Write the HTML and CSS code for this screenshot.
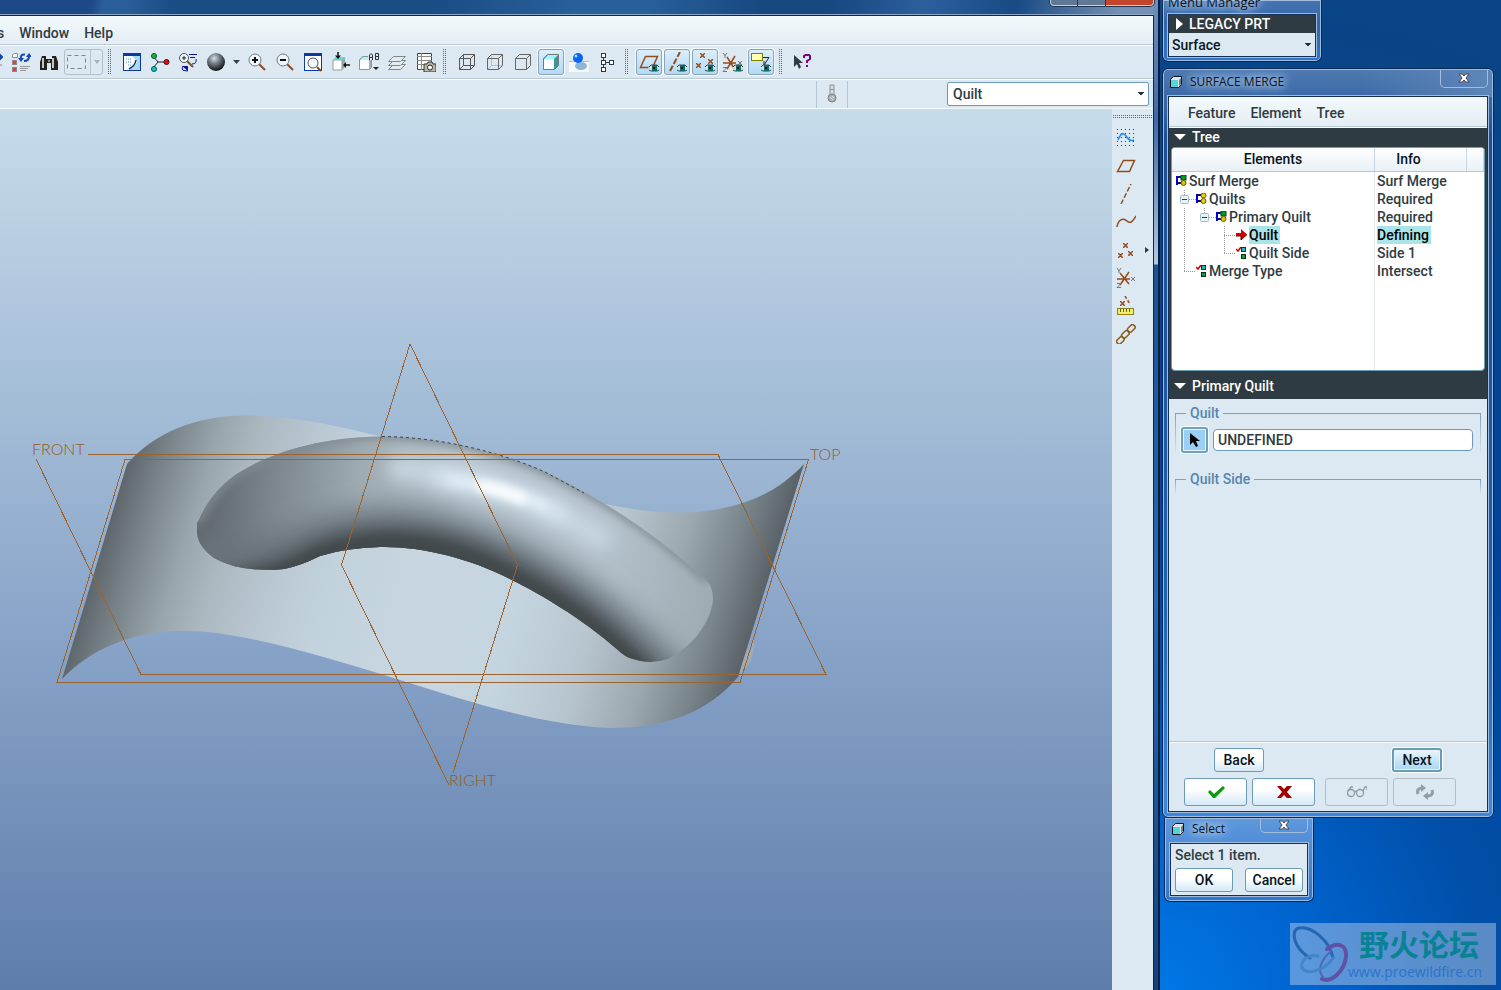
FILE: index.html
```
<!DOCTYPE html>
<html lang="en">
<head>
    <meta charset="UTF-8">
    <meta name="viewport" content="width=device-width, initial-scale=1.0">
    <title>Surface Merge</title>
    <link rel="stylesheet" href="styles.css">
</head>
<body>

<!-- Shared icon shapes -->
<svg class="defs" width="0" height="0" aria-hidden="true">
    <symbol id="eye" viewBox="0 0 12 8">
        <path d="M0 4L3 1H9L12 4L9 7H3Z" fill="#d8dfe2"/>
        <path d="M1 3L3 1H9L11 3M1 6L3 7H9L11 6" fill="none" stroke="#3a4247"/>
        <rect x="4" y="1" width="5" height="6" fill="#0a6e68"/>
        <rect x="5" y="3" width="2" height="2" fill="#012"/>
    </symbol>
    <symbol id="lens" viewBox="0 0 20 20">
        <path d="M12 12L18 18" stroke="#8a4b20" stroke-width="2"/>
        <circle cx="8" cy="8" r="6" fill="#eef5f9" stroke="#777"/>
    </symbol>
    <symbol id="cube" viewBox="0 0 12 12">
        <path d="M.5 3.500L3.500 .5H11.500V8.500L8.500 11.500H.5Z" fill="#dfe8e6" stroke="#112"/>
        <path d="M1 4H8V11H1Z" fill="#4fd9d6"/>
        <path d="M9 4L11 2V8L9 10Z" fill="#6d7c7c"/>
    </symbol>
    <symbol id="cross" viewBox="0 0 12 10">
        <path d="M1 1H4.500L6 3L7.500 1H11L8 5L11 9H7.500L6 7L4.500 9H1L4 5Z" fill="#fff" stroke="#445" stroke-width="1"/>
    </symbol>
    <symbol id="node" viewBox="0 0 11 11">
        <path d="M5 2H1V10M1 8H5" fill="none" stroke="#0000d8" stroke-width="2"/>
        <path d="M1 2H5M2 8H5" stroke="#111"/>
    </symbol>
    <symbol id="node-gy" viewBox="0 0 11 11">
        <use href="#node"/>
        <rect x="5" y="0" width="5" height="5" fill="#079b1c" stroke="#043" stroke-width="1"/>
        <circle cx="7.500" cy="8" r="2.500" fill="#d9c400" stroke="#665c00"/>
    </symbol>
    <symbol id="node-yy" viewBox="0 0 11 11">
        <use href="#node"/>
        <circle cx="7.500" cy="2.500" r="2.500" fill="#e4cf00" stroke="#665c00"/>
        <circle cx="7.500" cy="8" r="2.500" fill="#e4cf00" stroke="#665c00"/>
    </symbol>
    <symbol id="done" viewBox="0 0 11 12">
        <path d="M0 2L2 4L5 0" fill="none" stroke="#d00000" stroke-width="1.500"/>
        <rect x="5.500" y="0.500" width="4" height="4" fill="#22bcbc" stroke="#033"/>
        <rect x="5.500" y="7.500" width="4" height="4" fill="#10a030" stroke="#031"/>
    </symbol>
    <symbol id="minus" viewBox="0 0 20 18">
        <path d="M13 9.500H20" stroke="#999" stroke-dasharray="1 1"/>
        <path d="M8.500 0V5" stroke="#999" stroke-dasharray="1 1"/>
        <rect x="4.500" y="5.500" width="8" height="8" rx="1" fill="#e6f1f8" stroke="#9fbccd"/>
        <path d="M6 9.500H11" stroke="#25414f"/>
    </symbol>
    <symbol id="guide-v" viewBox="0 0 20 18">
        <path d="M8.500 0V18" stroke="#999" stroke-dasharray="1 1"/>
    </symbol>
    <symbol id="guide-tee" viewBox="0 0 20 18">
        <path d="M8.500 0V18M8 9.500H20" stroke="#999" stroke-dasharray="1 1"/>
    </symbol>
    <symbol id="guide-end" viewBox="0 0 20 18">
        <path d="M8.500 0V9M8 9.500H20" stroke="#999" stroke-dasharray="1 1"/>
    </symbol>
    <symbol id="xs" viewBox="0 0 5 5">
        <path d="M0 0L5 5M5 0L0 5" stroke="#964b1a" stroke-width="1.500"/>
    </symbol>
</svg>

<div class="desktop">

    <!-- Main application window -->
    <main class="app">
        <header class="app-title">
            <button class="cap" aria-label="Minimize"></button>
            <button class="cap" aria-label="Maximize"></button>
            <button class="cap cap-close" aria-label="Close"></button>
        </header>

        <div class="app-client">
            <nav class="menubar">
                <a href="#" class="cut">s</a>
                <a href="#">Window</a>
                <a href="#">Help</a>
            </nav>

            <div class="toolbar">
                <button class="tool" aria-label="Regenerate"><svg width="20" height="20"><path d="M12 5H19M16 2L19 5L16 8" fill="none" stroke="#1446a8" stroke-width="2"/><path d="M13 13H19" stroke="#888"/></svg></button>
                <button class="tool" aria-label="Regenerate manager"><svg width="20" height="20"><g stroke="#8a8a8a"><path d="M1.500 2.500L3.500 1.500H6.500V5.500H1.500Z" fill="#f8f8f8"/><rect x="1.500" y="8.500" width="4" height="4" fill="#e04040"/><rect x="1.500" y="15.500" width="4" height="4" fill="#e04040"/></g><path d="M9 14.500H19M9 16.500H17M9 18.500H15" stroke="#999"/><path d="M10 7Q9 2 14 2.500M18 4Q18 9 13 9" fill="none" stroke="#1446b8" stroke-width="2"/><path d="M7 6H13L10 10ZM15 5H21L18 1Z" fill="#1446b8"/></svg></button>
                <button class="tool" aria-label="Find"><svg width="20" height="20"><path d="M3 4H7V7H13V4H17L19 10V18H12V11H8V18H1V10Z" fill="#222"/><path d="M4 6V16M14 6V16" stroke="#c9c4b4" stroke-width="2"/><path d="M9 9H11" stroke="#999" stroke-width="2"/></svg></button>
                <button class="tool pick" aria-label="Select inside box" disabled><svg width="39" height="26"><path d="M26.500 1V25" stroke="#b8c4ca"/><rect x="3.500" y="6.500" width="18" height="13" fill="none" stroke="#7c868c" stroke-dasharray="4 3"/><path d="M30 11H36L33 15Z" fill="#a9b3b8"/></svg></button>
                <span class="grip"></span>
                <button class="tool" aria-label="Repaint"><svg width="20" height="20"><rect x="1.500" y="1.500" width="17" height="17" fill="#fff" stroke="#0a3aa0"/><path d="M1 1H19V4H1Z" fill="#0a3aa0"/><path d="M10 4H18V18H7Q14 14 15 9Z" fill="#a8d8f4"/><path d="M7 17Q13 14 14 8" fill="none" stroke="#11305e" stroke-width="1.500"/><path d="M4 7H9M4 10H10M6 13H9" stroke="#3a9ae0" stroke-dasharray="1 1"/></svg></button>
                <button class="tool" aria-label="Spin center"><svg width="20" height="20"><path d="M3 4L8 10L3 16M8 10H16" fill="none" stroke="#223"/><circle cx="4" cy="4" r="2.500" fill="#10c020" stroke="#053"/><circle cx="16.500" cy="10" r="2.500" fill="#e01010" stroke="#500"/><circle cx="4" cy="17" r="2.500" fill="#10c8c8" stroke="#055"/></svg></button>
                <button class="tool" aria-label="Orient mode"><svg width="20" height="20"><path d="M9 9L15 15" stroke="#8a4b20" stroke-width="2"/><circle cx="6" cy="6" r="4.500" fill="#eef5f9" stroke="#555"/><path d="M4 6H8M6 4V8" stroke="#222"/><g stroke="#1010a0" fill="none"><path d="M11 2.500H19M12 5.500H17M18 7Q19 12 14 12M5 14Q3 18 6 18.500L10 19"/></g><path d="M4 14H10V19Z" fill="#1010a0"/></svg></button>
                <button class="tool" aria-label="Appearance"><svg width="20" height="20"><defs><radialGradient id="ball" cx=".4" cy=".3" r=".7"><stop offset="0" stop-color="#d5dde2"/><stop offset=".4" stop-color="#78838b"/><stop offset="1" stop-color="#111"/></radialGradient></defs><circle cx="10" cy="10" r="9" fill="url(#ball)"/></svg></button>
                <button class="tool drop" aria-label="Appearance list"><svg width="7" height="4"><path d="M0 0H7L3.500 4Z" fill="#333e46"/></svg></button>
                <button class="tool" aria-label="Zoom in"><svg width="20" height="20"><use href="#lens"/><path d="M5 8H11M8 5V11" stroke="#111" stroke-width="2"/></svg></button>
                <button class="tool" aria-label="Zoom out"><svg width="20" height="20"><use href="#lens"/><path d="M5 8H11" stroke="#111" stroke-width="2"/></svg></button>
                <button class="tool" aria-label="Refit"><svg width="20" height="20"><rect x="1.500" y="1.500" width="17" height="17" fill="#fff" stroke="#0a3aa0"/><path d="M1 1H19V4H1Z" fill="#0a3aa0"/><path d="M14 15L18 19" stroke="#8a4b20" stroke-width="2"/><circle cx="10" cy="11" r="5" fill="#f2f8fb" stroke="#555"/></svg></button>
                <button class="tool" aria-label="Reorient"><svg width="20" height="20"><path d="M2 8L5 5H14V15L11 18H2Z" fill="#9aa"/><path d="M2 8H11V18H2Z" fill="#fff" stroke="#999"/><path d="M2 8L5 5H14L11 8Z" fill="#55dede"/><path d="M7 0V5M19 13H15" stroke="#111" stroke-width="1.500"/><path d="M4 3.500H10L7 7ZM15 10V16L12 13Z" fill="#111"/></svg></button>
                <button class="tool" aria-label="Saved views"><svg width="22" height="20"><path d="M1.500 7.500L4.500 4.500H13.500V15.500L11.500 17.500H1.500Z" fill="#aab" stroke="#899"/><path d="M2 8H11V17H2Z" fill="#fff"/><path d="M2 8L5 5H13L11 8Z" fill="#b4f2f0"/><rect x="10" y="0" width="12" height="8" fill="#dce9f2"/><path d="M11.500 8V3L13 1.500L14.500 3V8M12 5.500H14M17.500 1.500V7.500H20.500V1.500H17.500M17.500 4.500H20.500" fill="none" stroke="#333"/><path d="M15 15H21L18 18Z" fill="#222"/></svg></button>
                <button class="tool" aria-label="Layers"><svg width="20" height="20"><g fill="#e4ebef" stroke="#80898e"><path d="M1.500 17.500L6.500 12.500H18.500L13.500 17.500Z"/><path d="M1.500 13.500L6.500 8.500H18.500L13.500 13.500Z"/><path d="M1.500 9.500L6.500 4.500H18.500L13.500 9.500Z"/></g></svg></button>
                <button class="tool" aria-label="View manager"><svg width="22" height="20"><path d="M3.500 1.500H17.500V17.500H3.500Z" fill="#fff" stroke="#444"/><path d="M3 4.500H18M3 8.500H18M3 12.500H18M7.500 1V18" stroke="#888"/><path d="M10 12H13L14 10H18L19 12H22V20H10Z" fill="#b9b6a2" stroke="#333"/><circle cx="16" cy="15.500" r="2.500" fill="#fff" stroke="#222"/></svg></button>
                <span class="grip"></span>
                <button class="tool" aria-label="Wireframe"><svg width="20" height="20"><path d="M2.500 6.500H13.500V17.500H2.500ZM2.500 6.500L6.500 2.500H17.500V13.500L13.500 17.500M13.500 6.500L17.500 2.500M6.500 2.500V13.500H17.500M6.500 13.500L2.500 17.500" fill="none" stroke="#555"/></svg></button>
                <button class="tool" aria-label="Hidden line"><svg width="20" height="20"><path d="M6.500 2.500V13.500H17.500M6.500 13.500L2.500 17.500" fill="none" stroke="#b3bec5"/><path d="M2.500 6.500H13.500V17.500H2.500ZM2.500 6.500L6.500 2.500H17.500V13.500L13.500 17.500M13.500 6.500L17.500 2.500" fill="none" stroke="#666"/></svg></button>
                <button class="tool" aria-label="No hidden"><svg width="20" height="20"><path d="M2.500 6.500H13.500V17.500H2.500ZM2.500 6.500L6.500 2.500H17.500V13.500L13.500 17.500M13.500 6.500L17.500 2.500" fill="none" stroke="#666"/></svg></button>
                <button class="tool on" aria-label="Shading"><svg width="20" height="20"><path d="M2.500 6.500L6.500 2.500H17.500V13.500L13.500 17.500H2.500Z" fill="#3a9a9a" stroke="#777"/><path d="M3 7L7 3H17L13 7Z" fill="#9ff6f6"/><path d="M3 7H13V17H3Z" fill="#fff"/></svg></button>
                <button class="tool" aria-label="Enhanced realism"><svg width="20" height="20"><rect x="0" y="10" width="20" height="10" fill="#f4f8fa"/><path d="M0 9.500H20" stroke="#b4bcc4"/><ellipse cx="12" cy="14" rx="6" ry="4" fill="#8fb5d6"/><circle cx="9" cy="6" r="5" fill="#0a64f0"/><circle cx="7" cy="4" r="1.500" fill="#a8d4ff"/></svg></button>
                <button class="tool" aria-label="Model tree"><svg width="20" height="20"><g fill="#fff" stroke="#2f3a42"><path d="M6.500 5V15M9 10.500H12"/><rect x="4.500" y="1.500" width="4" height="4"/><rect x="4.500" y="8.500" width="4" height="4"/><rect x="4.500" y="15.500" width="4" height="4"/><rect x="12.500" y="8.500" width="4" height="4"/></g></svg></button>
                <span class="grip"></span>
                <button class="tool on" aria-label="Plane display"><svg width="22" height="20"><path d="M2.500 15.500L7.500 4.500H19.500L14.500 15.500Z" fill="none" stroke="#964b1a" stroke-width="1.500"/><use href="#eye" x="10" y="12" width="12" height="8"/></svg></button>
                <button class="tool on" aria-label="Axis display"><svg width="22" height="20"><path d="M4 19L14 0" stroke="#964b1a" stroke-width="2" stroke-dasharray="6 2"/><use href="#eye" x="10" y="12" width="12" height="8"/></svg></button>
                <button class="tool on" aria-label="Point display"><svg width="22" height="20"><use href="#xs" x="6" y="1" width="5" height="5"/><use href="#xs" x="14" y="7" width="5" height="5"/><use href="#xs" x="2" y="11" width="5" height="5"/><use href="#eye" x="10" y="12" width="12" height="8"/></svg></button>
                <button class="tool" aria-label="Csys display"><svg width="22" height="20"><path d="M1 11H14M5 17L13 4M5 5L12 16" stroke="#964b1a" stroke-width="1.500"/><path d="M1 1L3 3.500L5 1M3 3V6M1 15.500H5L1 19.500H5M16 9L20 13M20 9L16 13" fill="none" stroke="#777"/><use href="#eye" x="10" y="12" width="12" height="8"/></svg></button>
                <button class="tool on" aria-label="Annotation display"><svg width="22" height="20"><rect x="1.500" y="1.500" width="11" height="7" fill="#ffffb0" stroke="#808000"/><path d="M13 5.500H19L14 13M14 9V14H18" fill="none" stroke="#222"/><use href="#eye" x="10" y="12" width="12" height="8"/></svg></button>
                <span class="grip"></span>
                <button class="tool" aria-label="What's this?"><svg width="20" height="20"><path d="M1 3L10 11H6L8 15L6 17L4 12L1 15Z" fill="#2f3a42"/><path d="M11 6V4L12.500 3H16L17 4V7L14 9V11M14 13V15" fill="none" stroke="#7a0080" stroke-width="2"/></svg></button>
            </div>

            <div class="filterbar">
                <span class="status-light"><svg width="12" height="20"><path d="M4 1H8V12H4Z" fill="#d5dde2" stroke="#8a9499"/><path d="M4 5.500H8" stroke="#8a9499"/><circle cx="6" cy="14" r="4" fill="#a9b1b5" stroke="#7a8489"/><path d="M4 13L7 16M6 12L8 14" stroke="#dde3e6"/></svg></span>
                <select class="filter" aria-label="Selection filter">
                    <option>Quilt</option>
                </select>
            </div>

            <div class="workspace">
                <div class="viewport">
                    <svg class="model" viewBox="0 109 1112 881" preserveAspectRatio="xMidYMid meet">
                        <defs>
                            <linearGradient id="quilt" gradientUnits="userSpaceOnUse" x1="62" y1="678" x2="680" y2="867">
                                <stop offset="0" stop-color="#5f676c"/>
                                <stop offset=".06" stop-color="#7d888e"/>
                                <stop offset=".12" stop-color="#98a5ac"/>
                                <stop offset=".18" stop-color="#abb8c0"/>
                                <stop offset=".26" stop-color="#b8c6d1"/>
                                <stop offset=".35" stop-color="#c2d2dc"/>
                                <stop offset=".5" stop-color="#c7d6e0"/>
                                <stop offset=".64" stop-color="#c5d5df"/>
                                <stop offset=".76" stop-color="#b7c5cf"/>
                                <stop offset=".86" stop-color="#9ba8af"/>
                                <stop offset=".94" stop-color="#78838a"/>
                                <stop offset="1" stop-color="#5a6267"/>
                            </linearGradient>
                            <linearGradient id="tube" gradientUnits="userSpaceOnUse" x1="197" y1="530" x2="713" y2="600">
                                <stop offset="0" stop-color="#5d656a"/>
                                <stop offset=".12" stop-color="#78838a"/>
                                <stop offset=".3" stop-color="#a0acb4"/>
                                <stop offset=".5" stop-color="#b6c4cf"/>
                                <stop offset=".8" stop-color="#b2c0ca"/>
                                <stop offset="1" stop-color="#9fabb2"/>
                            </linearGradient>
                            <clipPath id="tube-clip">
                                <path d="M197 523L199 520C204 507 217 488 234 476C260 458 310 437 382 436.500C440 437 500 452 545 472C600 497 660 537 706 580Q713 586 713 600C711 620 695 645 668 659Q650 665 633 659Q625 657 618 650C580 617 540 594 512 580C470 558 420 546 380 547Q345 548 320 556Q300 566 284 569Q240 573 214 558Q196 545 197 530Z"/>
                            </clipPath>
                            <filter id="soft4" filterUnits="userSpaceOnUse" x="100" y="350" width="700" height="450"><feGaussianBlur stdDeviation="4"/></filter>
                            <filter id="soft8" filterUnits="userSpaceOnUse" x="100" y="350" width="700" height="450"><feGaussianBlur stdDeviation="8"/></filter>
                            <filter id="soft14" filterUnits="userSpaceOnUse" x="100" y="350" width="700" height="450"><feGaussianBlur stdDeviation="14"/></filter>
                        </defs>

                        <!-- Wavy quilt -->
                        <path d="M754 640Q756 660 740 674L738 664Z" fill="#a0abb1"/>
                        <path d="M62 679L127 464C154 433 196 415 250 415.500C300 417 340 426 382 437L600 503C640 511 665 513 690 512.500C740 509 775 495 804 464L738 677C708 712 667 728 612 728C545 726 470 702 400 680C320 655 240 631 185 631C130 631 90 650 62 679Z" fill="url(#quilt)"/>

                        <!-- Swept tube -->
                        <g clip-path="url(#tube-clip)">
                            <rect x="190" y="430" width="530" height="240" fill="url(#tube)"/>
                            <g fill="none" stroke-linecap="round">
                                <path d="M190 580Q270 590 320 562C400 534 460 557 512 584C560 609 590 629 650 690" stroke="#69737a" stroke-width="84" filter="url(#soft14)"/>
                                <path d="M190 600Q270 590 320 562C400 534 460 557 512 584C560 609 590 629 650 690" stroke="#50575c" stroke-width="46" filter="url(#soft8)"/>
                                <path d="M255 584Q285 580 320 560C400 532 460 555 512 582C560 607 590 627 645 680" stroke="#43484b" stroke-width="26" filter="url(#soft4)"/>
                                <path d="M199 520C210 500 217 488 234 476C260 458 310 437 382 435C440 436 500 451 545 471C600 496 660 536 706 579" stroke="#808b92" stroke-width="8" filter="url(#soft4)"/>
                                <path d="M400 468Q510 480 600 538" stroke="#c6d5df" stroke-width="24" filter="url(#soft8)"/>
                                <path d="M440 478Q505 484 560 514" stroke="#dfedf7" stroke-width="12" filter="url(#soft8)"/>
                                <path d="M452 481Q500 485 545 506" stroke="#e6f1f9" stroke-width="6" filter="url(#soft4)"/>
                                <path d="M482 487Q502 490 522 499" stroke="#fff" stroke-width="10" filter="url(#soft4)"/>
                            </g>
                        </g>
                        <path d="M382 436.500C440 437 500 452 545 472L584 493" fill="none" stroke="#3d4347" stroke-dasharray="3 3"/>

                        <!-- Datum planes -->
                        <g class="datum">
                            <path d="M88 454.500H718L826 674.500H141L36 459"/>
                            <path d="M125 459.500H808.500L740 682.500H57Z"/>
                            <path d="M453 773L517.500 565L410 344L341.500 565L449 785"/>
                        </g>
                        <g class="datum-label">
                            <text x="32" y="455">FRONT</text>
                            <text x="810" y="460">TOP</text>
                            <text x="449" y="786">RIGHT</text>
                        </g>
                    </svg>
                </div>

                <div class="sidebar">
                    <span class="grip-h"></span>
                    <button class="tool" aria-label="Sketch"><svg width="20" height="20"><g stroke="#1a3a8a" stroke-dasharray="1 3"><path d="M1 1.500H19M1 5.500H19M1 9.500H19M1 13.500H19M1 17.500H19"/></g><path d="M2 12Q6 2 10 8T18 12" fill="none" stroke="#1a8cf0" stroke-width="1.500"/></svg></button>
                    <button class="tool" aria-label="Plane"><svg width="20" height="20"><path d="M1.500 15.500L7.500 4.500H18.500L13.500 15.500Z" fill="none" stroke="#964b1a" stroke-width="1.500"/></svg></button>
                    <button class="tool" aria-label="Axis"><svg width="20" height="20"><path d="M5 20L15 0" stroke="#964b1a" stroke-width="1.500" stroke-dasharray="5 2"/></svg></button>
                    <button class="tool" aria-label="Curve"><svg width="20" height="20"><path d="M1 15C2 8 7 5 11 9S18 7 20 4" fill="none" stroke="#964b1a" stroke-width="1.500"/></svg></button>
                    <div class="tool-group">
                        <button class="tool" aria-label="Point"><svg width="20" height="20"><use href="#xs" x="7" y="3" width="5" height="5"/><use href="#xs" x="12" y="11" width="5" height="5"/><use href="#xs" x="2" y="13" width="5" height="5"/></svg></button>
                        <button class="tool drop" aria-label="More point tools"><svg width="4" height="6"><path d="M0 0L4 3L0 6Z" fill="#2f3a42"/></svg></button>
                    </div>
                    <button class="tool" aria-label="Coordinate system"><svg width="20" height="20"><path d="M1 11H14M4 17L13 4M4 5L13 16" stroke="#964b1a" stroke-width="1.500"/><path d="M1 0L3 3L5 0M3 3V5M1 15.500H5L1 19.500H5M15 9L19 13M19 9L15 13" fill="none" stroke="#777"/></svg></button>
                    <button class="tool" aria-label="Analysis"><svg width="20" height="20"><use href="#xs" x="4" y="5" width="5" height="5"/><path d="M9 0L14 8" stroke="#964b1a" stroke-width="1.500" stroke-dasharray="3 2"/><rect x="1.500" y="12.500" width="16" height="6" fill="#f4ee60" stroke="#8a8420"/><path d="M4.500 13V16M7.500 13V16M10.500 13V16M13.500 13V16" stroke="#665f10"/></svg></button>
                    <button class="tool" aria-label="Reference"><svg width="20" height="20"><g fill="none" stroke="#8a5a1a" stroke-width="1.500"><rect x="-4" y="-2" width="8" height="5" rx="2" transform="translate(4 16) rotate(-45)"/><rect x="-4" y="-2" width="8" height="5" rx="2" transform="translate(9 10) rotate(-45)"/><rect x="-4" y="-2" width="8" height="5" rx="2" transform="translate(15 4) rotate(-45)"/></g></svg></button>
                </div>
            </div>
        </div>
    </main>

    <!-- Floating dialogs -->
    <aside class="dialogs">
        <section class="window menu-manager">
            <div class="caption"><span class="glow">Menu Manager</span></div>
            <div class="client">
                <h2 class="bar"><svg width="7" height="12"><path d="M0 0L7 6L0 12Z" fill="#fff"/></svg>LEGACY PRT</h2>
                <select class="flat" aria-label="Part menu">
                    <option>Surface</option>
                </select>
            </div>
        </section>

        <section class="window merge">
            <div class="caption">
                <svg width="12" height="12"><use href="#cube"/></svg>
                <span class="glow">SURFACE MERGE</span>
                <button class="close" aria-label="Close"><svg width="12" height="10"><use href="#cross"/></svg></button>
            </div>
            <div class="client">
                <nav class="menubar merge-menu">
                    <a href="#">Feature</a>
                    <a href="#">Element</a>
                    <a href="#">Tree</a>
                </nav>
                <div class="dark">
                    <h2 class="bar"><svg width="12" height="6"><path d="M0 0H12L6 6Z" fill="#fff"/></svg>Tree</h2>
                    <div class="tree">
                        <table>
                            <thead>
                                <tr><th>Elements</th><th class="info">Info</th><th class="rest"></th></tr>
                            </thead>
                            <tbody>
                                <tr>
                                    <td><div class="item"><svg width="11" height="11"><use href="#node-gy"/></svg><span>Surf Merge</span></div></td>
                                    <td colspan="2">Surf Merge</td>
                                </tr>
                                <tr>
                                    <td><div class="item"><svg width="20" height="18"><use href="#minus"/></svg><svg width="11" height="11"><use href="#node-yy"/></svg><span>Quilts</span></div></td>
                                    <td colspan="2">Required</td>
                                </tr>
                                <tr>
                                    <td><div class="item"><svg width="20" height="18"><use href="#guide-v"/></svg><svg width="20" height="18"><use href="#minus"/></svg><svg width="11" height="11"><use href="#node-gy"/></svg><span>Primary Quilt</span></div></td>
                                    <td colspan="2">Required</td>
                                </tr>
                                <tr class="current">
                                    <td><div class="item"><svg width="20" height="18"><use href="#guide-v"/></svg><svg width="20" height="18"></svg><svg width="20" height="18"><use href="#guide-tee"/></svg><svg width="11" height="11"><path d="M0 4H5V0L11 5.500L5 11V7H0Z" fill="#d40000"/><path d="M0 7H5V11L11 5.500" fill="none" stroke="#600"/></svg><span><mark>Quilt</mark></span></div></td>
                                    <td colspan="2"><mark>Defining</mark></td>
                                </tr>
                                <tr>
                                    <td><div class="item"><svg width="20" height="18"><use href="#guide-v"/></svg><svg width="20" height="18"></svg><svg width="20" height="18"><use href="#guide-end"/></svg><svg width="11" height="12"><use href="#done"/></svg><span>Quilt Side</span></div></td>
                                    <td colspan="2">Side 1</td>
                                </tr>
                                <tr>
                                    <td><div class="item"><svg width="20" height="18"><use href="#guide-end"/></svg><svg width="11" height="12"><use href="#done"/></svg><span>Merge Type</span></div></td>
                                    <td colspan="2">Intersect</td>
                                </tr>
                                <tr class="filler"><td></td><td colspan="2"></td></tr>
                            </tbody>
                        </table>
                    </div>
                    <h2 class="bar bar-tall"><svg width="12" height="6"><path d="M0 0H12L6 6Z" fill="#fff"/></svg>Primary Quilt</h2>
                </div>

                <div class="panel">
                    <fieldset>
                        <legend>Quilt</legend>
                        <div class="collector">
                            <button class="arrow" aria-label="Select quilt"><svg width="12" height="16"><path d="M1 1V13L4 10L7 15L9 14L7 9H11Z" fill="#000"/></svg></button>
                            <input type="text" value="UNDEFINED" aria-label="Quilt">
                        </div>
                    </fieldset>
                    <fieldset class="side">
                        <legend>Quilt Side</legend>
                    </fieldset>
                </div>

                <div class="footer">
                    <div class="steps">
                        <button class="btn">Back</button>
                        <button class="btn focus">Next</button>
                    </div>
                    <div class="actions">
                        <div class="pair">
                            <button class="btn" aria-label="Apply"><svg width="18" height="14"><path d="M1 7L3 5L7 9L16 1L18 3L8 13H6Z" fill="#0a9a0a"/></svg></button>
                            <button class="btn" aria-label="Cancel feature"><svg width="16" height="14"><path d="M1 1H5L8 4L11 1H16L11 7L16 13H11L8 10L5 13H1L6 7Z" fill="#a00000"/></svg></button>
                        </div>
                        <div class="pair">
                            <button class="btn" aria-label="Preview" disabled><svg width="20" height="12"><g fill="none" stroke="#8f999f" stroke-width="1.300"><circle cx="4" cy="7" r="3.500"/><circle cx="13" cy="7" r="3.500"/><path d="M7 5.500H10M1 5L4 1H6M16 5L18 1H20V4"/></g></svg></button>
                            <button class="btn" aria-label="Refresh" disabled><svg width="20" height="16"><path d="M3 10Q1 4 8 4M17 6Q19 12 12 12" fill="none" stroke="#949da2" stroke-width="3"/><path d="M6 0L11 4L6 8ZM13 8V16L8 12Z" fill="#949da2"/></svg></button>
                        </div>
                    </div>
                </div>
            </div>
        </section>

        <section class="window select">
            <div class="caption">
                <svg width="12" height="12"><use href="#cube"/></svg>
                <span class="glow">Select</span>
                <button class="close" aria-label="Close"><svg width="12" height="10"><use href="#cross"/></svg></button>
            </div>
            <div class="client">
                <p>Select 1 item.</p>
                <div class="answers">
                    <button class="btn">OK</button>
                    <button class="btn">Cancel</button>
                </div>
            </div>
        </section>
    </aside>

    <div class="watermark">
        <svg width="58" height="62" viewBox="0 0 58 62">
            <g fill="none" stroke-linecap="round">
                <path d="M43 35C40 18 22 3 9 5C-1 8 5 26 20 35" stroke="#2466b5" stroke-width="3"/>
                <path d="M37 26C48 18 57 22 56 34C54 48 42 60 32 56" stroke="#5f52a4" stroke-width="4"/>
                <path d="M34 55C26 48 31 37 41 28" stroke="#4c6ab8" stroke-width="2"/>
                <path d="M28 33C14 31 8 42 14 47C22 52 38 44 43 35" stroke="#4384ca" stroke-width="3"/>
            </g>
        </svg>
        <div class="brand">
            <strong lang="zh">野火论坛</strong>
            <span>www.proewildfire.cn</span>
        </div>
    </div>
</div>

</body>
</html>
```

FILE: styles.css
```
* {
    box-sizing: border-box;
}

body {
    margin: 0;
    font-family: Roboto, "Liberation Sans", sans-serif;
    font-size: 14px;
    font-weight: 500;
    line-height: 18px;
    color: #2f3b42;
}

button, select, input {
    font: inherit;
    color: inherit;
    margin: 0;
    padding: 0;
}

svg {
    display: block;
    flex: none;
}

a {
    color: inherit;
    text-decoration: none;
}

h2, p {
    margin: 0;
    font: inherit;
}

.defs {
    position: absolute;
}

.desktop {
    position: relative;
    display: flex;
    min-height: 100vh;
    overflow: hidden;
    background: radial-gradient(circle at 77% 100%, #0077e6 0, #0062cc 170px, #004fa8 330px, #00449a 560px, #0a4585 1000px);
}

/* Application window */
.app {
    flex: 1;
    min-width: 0;
    display: flex;
    flex-direction: column;
    padding-right: 4px;
    border-right: 2px solid #081c3c;
    background: linear-gradient(#6f8fba 0, #4069a5 120px, #b4c7df 264px, #1c5192 265px, #2a68b0 600px, #12427c);
}

.app-title {
    display: flex;
    justify-content: flex-end;
    height: 15px;
    border-bottom: 1px solid #8ea9c8;
    background: linear-gradient(100deg, #1d4a86 0 8%, #2a5e98 9% 11%, #1b4d85 15% 38%, #28609a 50% 56%, #184880 66% 72%, #2c5f9c 80%, #184a84 88%, #7490b4 97%);
}

.cap {
    width: 28px;
    height: 6px;
    border: 1px solid #c4cfdc;
    border-top: 0;
    border-radius: 0 0 0 4px;
    background: #5f7896;
    box-shadow: 0 0 0 1px #24364e;
}

.cap + .cap {
    border-radius: 0;
    border-left: 0;
}

.cap.cap-close {
    width: 48px;
    border-radius: 0 0 4px 0;
    background: #c2452c;
}

.app-client {
    flex: 1;
    display: flex;
    flex-direction: column;
    border-top: 1px solid #13263c;
    border-right: 1px solid #13263c;
    background: #dce9f2;
}

.menubar {
    display: flex;
    align-items: center;
    gap: 15px;
    height: 29px;
    padding-top: 5px;
    border-bottom: 1px solid #b9c9d6;
    background: linear-gradient(#f3fafc, #e5edf5);
}

.menubar .cut {
    margin-left: -3px;
}

.toolbar {
    display: flex;
    align-items: center;
    gap: 2px;
    height: 34px;
    margin-left: -20px;
    border-top: 1px solid #f8fcfe;
    border-bottom: 1px solid #b9c9d6;
}

.tool {
    flex: none;
    display: flex;
    align-items: center;
    justify-content: center;
    width: 26px;
    height: 26px;
    border: 0;
    background: none;
}

.tool.on {
    border: 1px solid #8ba3b5;
    border-radius: 3px;
    background: linear-gradient(#dceefa, #b2daf6);
    box-shadow: 0 0 0 1px #f4fafd;
}

.tool.pick {
    width: 39px;
    border: 1px solid #b4c0c6;
    border-radius: 3px;
}

.tool.drop {
    width: 11px;
}

.grip {
    flex: none;
    width: 4px;
    height: 26px;
    margin: 0 5px 0 3px;
    background: repeating-linear-gradient(transparent 0 1px, #dce9f2 1px 2px), repeating-linear-gradient(90deg, #3f7096 0 1px, #dce9f2 1px 2px);
}

.filterbar {
    display: flex;
    align-items: center;
    justify-content: flex-end;
    gap: 99px;
    height: 30px;
    padding-right: 4px;
    border-top: 1px solid #f8fcfe;
    border-bottom: 1px solid #f4f9fc;
}

.status-light {
    display: flex;
    align-items: center;
    justify-content: center;
    width: 32px;
    height: 27px;
    border: 1px solid #b4c4d0;
    border-width: 0 1px;
}

select {
    appearance: none;
    border: 1px solid #6b9cb4;
    border-radius: 2px;
    background-color: #fff;
    background-image: linear-gradient(to bottom right, #26333b 50%, transparent 51%), linear-gradient(to bottom left, #26333b 50%, transparent 51%);
    background-position: right 4px center, right 7px center;
    background-size: 3px 4px;
    background-repeat: no-repeat;
}

.filter {
    width: 202px;
    height: 24px;
    padding-left: 5px;
}

.workspace {
    flex: 1;
    display: flex;
}

.viewport {
    flex: 1;
    min-width: 0;
    background: linear-gradient(#c7dceb, #a4bdd7 33%, #839fc5 65%, #5f7dab);
}

.model {
    width: 100%;
    height: 100%;
}

.datum {
    fill: none;
    stroke: #9a6330;
    shape-rendering: crispEdges;
}

.datum-label {
    font-family: Lato, sans-serif;
    font-size: 16px;
    font-weight: 300;
    fill: #9a5a20;
}

.sidebar {
    display: flex;
    flex-direction: column;
    gap: 2px;
    width: 41px;
    padding: 6px 1px;
}

.grip-h {
    height: 4px;
    margin-bottom: 4px;
    background: repeating-linear-gradient(transparent 0 1px, #dce9f2 1px 2px), repeating-linear-gradient(90deg, #3f7096 0 1px, #dce9f2 1px 2px);
}

.tool-group {
    display: flex;
    align-items: center;
    gap: 2px;
}

.tool-group .drop {
    height: 26px;
}

/* Glass dialogs */
.dialogs {
    display: flex;
    flex-direction: column;
    align-items: flex-start;
    width: 341px;
    padding-left: 2px;
}

.window {
    padding: 0 5px 5px;
    border: 1px solid #0b2850;
    border-radius: 6px;
    background: linear-gradient(#4874ae, #2f66ae 40%, #2b76cc);
    box-shadow: inset 0 0 0 1px #9fbcdf;
}

.caption {
    display: flex;
    align-items: center;
    gap: 8px;
    height: 27px;
    padding: 0 0 2px 2px;
    font-family: "Open Sans", "Noto Sans", sans-serif;
    font-size: 12px;
    font-weight: 400;
    color: #0b1420;
}

.glow {
    text-shadow: 0 0 6px #b9d2f0, 0 0 10px #b9d2f0, 0 0 14px #b9d2f0;
}

.close {
    display: flex;
    align-items: center;
    justify-content: center;
    align-self: flex-start;
    width: 48px;
    height: 19px;
    margin-left: auto;
    border: 1px solid #a5bddb;
    border-top: 0;
    border-radius: 0 0 5px 5px;
    background: none;
}

.client {
    border: 1px solid #163056;
    outline: 1px solid #9fbcdf;
    background: #dce9f2;
}

.bar {
    display: flex;
    align-items: center;
    gap: 6px;
    height: 19px;
    padding: 0 0 2px 5px;
    background: #2f3b42;
    color: #fff;
}

.menu-manager {
    width: 160px;
    height: 62px;
    border-top: 0;
    border-radius: 0 0 6px 6px;
}

.menu-manager .caption {
    align-items: flex-end;
    height: 14px;
    padding: 0 0 3px;
    font-size: 13px;
    line-height: 18px;
}

.menu-manager .bar {
    height: 18px;
    padding: 0 0 0 7px;
}

.flat {
    width: 100%;
    height: 23px;
    padding-left: 3px;
    border: 0;
    color: #0c181f;
    background-color: #dce9f2;
}

.merge {
    position: relative;
    width: 332px;
    margin-top: 6px;
    background: linear-gradient(90deg, transparent 60%, #5d86b8 100%) top / 100% 28px no-repeat, linear-gradient(#4f7ab2, #1b4f95 70px, #1e5fb2 70%, #3a88e0);
}

.merge-menu {
    height: 30px;
    padding: 2px 0 0 19px;
}

.dark {
    background: #2f3b42;
    border-top: 1px solid #f8fcfe;
}

.tree {
    height: 224px;
    margin: 0 2px;
    border: 1px solid #6b9cb4;
    border-radius: 4px;
    background: #fff;
    overflow: hidden;
}

table {
    width: 100%;
    height: 100%;
    border-collapse: collapse;
    table-layout: fixed;
}

th, td {
    height: 18px;
    padding: 0;
    font-weight: 500;
    text-align: left;
}

th {
    height: 23px;
    border-right: 1px solid #c5d6e2;
    border-bottom: 1px solid #b4c9d8;
    text-align: center;
    color: #08151c;
    background: linear-gradient(#fff, #e8f0f6);
}

th.info {
    width: 92px;
    padding-right: 24px;
}

th.rest {
    width: 17px;
}

td:first-child {
    border-right: 1px solid #dce9f2;
}

td + td {
    padding-left: 2px;
}

.filler td {
    height: auto;
}

.item {
    display: flex;
    align-items: center;
    height: 18px;
    padding-left: 4px;
}

.item span {
    padding-left: 2px;
}

mark {
    display: inline-block;
    height: 18px;
    padding-right: 2px;
    background: #a8e4e8;
    color: #000;
}

.bar-tall {
    height: 28px;
    padding-top: 3px;
}

.panel {
    height: 342px;
    padding: 5px 6px;
}

fieldset {
    height: 50px;
    margin: 0 0 16px;
    padding: 0 0 0 5px;
    border: 1px solid #7ba0c0;
    border-bottom: 0;
    border-image: linear-gradient(#7ba0c0, #dce9f2) 1;
    border-image-width: 1px 1px 0;
}

legend {
    margin-left: 5px;
    padding: 0 4px;
    color: #5585b0;
}

.side {
    height: 24px;
}

.collector {
    display: flex;
    align-items: center;
    gap: 5px;
    padding: 5px 7px 0 0;
}

.arrow {
    display: flex;
    align-items: center;
    justify-content: center;
    width: 27px;
    height: 26px;
    border: 2px solid #72a0b8;
    border-radius: 3px;
    background: #9bd0f6;
    box-shadow: inset 0 0 0 1px #e8f4fb, 0 0 0 1px #f4fafd;
}

.collector input {
    flex: 1;
    min-width: 0;
    height: 22px;
    padding-left: 4px;
    border: 1px solid #6b9cb4;
    border-radius: 4px;
    background: #fff;
}

.footer {
    border-top: 1px solid #b9c6cf;
    box-shadow: inset 0 1px #f8fcfe;
    padding: 6px 0 5px;
}

.steps {
    display: flex;
    justify-content: space-between;
    padding: 0 45px;
}

.actions {
    display: flex;
    gap: 10px;
    padding: 6px 0 0 15px;
}

.pair {
    display: flex;
    gap: 5px;
}

.btn {
    display: flex;
    align-items: center;
    justify-content: center;
    border: 1px solid #6b9cb4;
    border-radius: 3px;
    background: linear-gradient(#fff 40%, #d4e9f6);
    color: #08151c;
}

.steps .btn {
    width: 50px;
    height: 24px;
}

.steps .btn.focus {
    border: 2px solid #6b9cb4;
    background: linear-gradient(#eaf5fc, #a8d6f6);
    box-shadow: inset 0 0 0 1px #e8f4fb, 0 0 0 1px #f8fcfe;
}

.actions .btn {
    width: 63px;
    height: 28px;
}

.btn:disabled {
    border-color: #b4bec3;
    background: none;
}

.select {
    width: 150px;
    margin-left: 2px;
    border-top: 0;
    border-radius: 0 0 6px 6px;
    background: linear-gradient(#5f98dc, #2f76cf);
}

.select .caption {
    height: 25px;
    padding-bottom: 4px;
}

.select .close {
    height: 15px;
}

.select .client {
    padding: 2px 4px 3px;
}

.answers {
    display: flex;
    justify-content: space-between;
    padding-top: 4px;
}

.answers .btn {
    width: 58px;
    height: 24px;
}

/* Forum stamp over the wallpaper */
.watermark {
    position: absolute;
    right: 5px;
    bottom: 5px;
    display: flex;
    width: 206px;
    height: 62px;
    background: rgba(200, 212, 236, 0.45);
}

.brand {
    display: flex;
    flex-direction: column;
}

.brand strong {
    padding-left: 11px;
    font-family: "Noto Sans CJK SC", sans-serif;
    font-size: 30px;
    font-weight: 700;
    line-height: 40px;
    color: #0a8296;
}

.brand span {
    font-family: "Open Sans", sans-serif;
    font-size: 14px;
    font-weight: 400;
    color: #2a74cc;
}
```
